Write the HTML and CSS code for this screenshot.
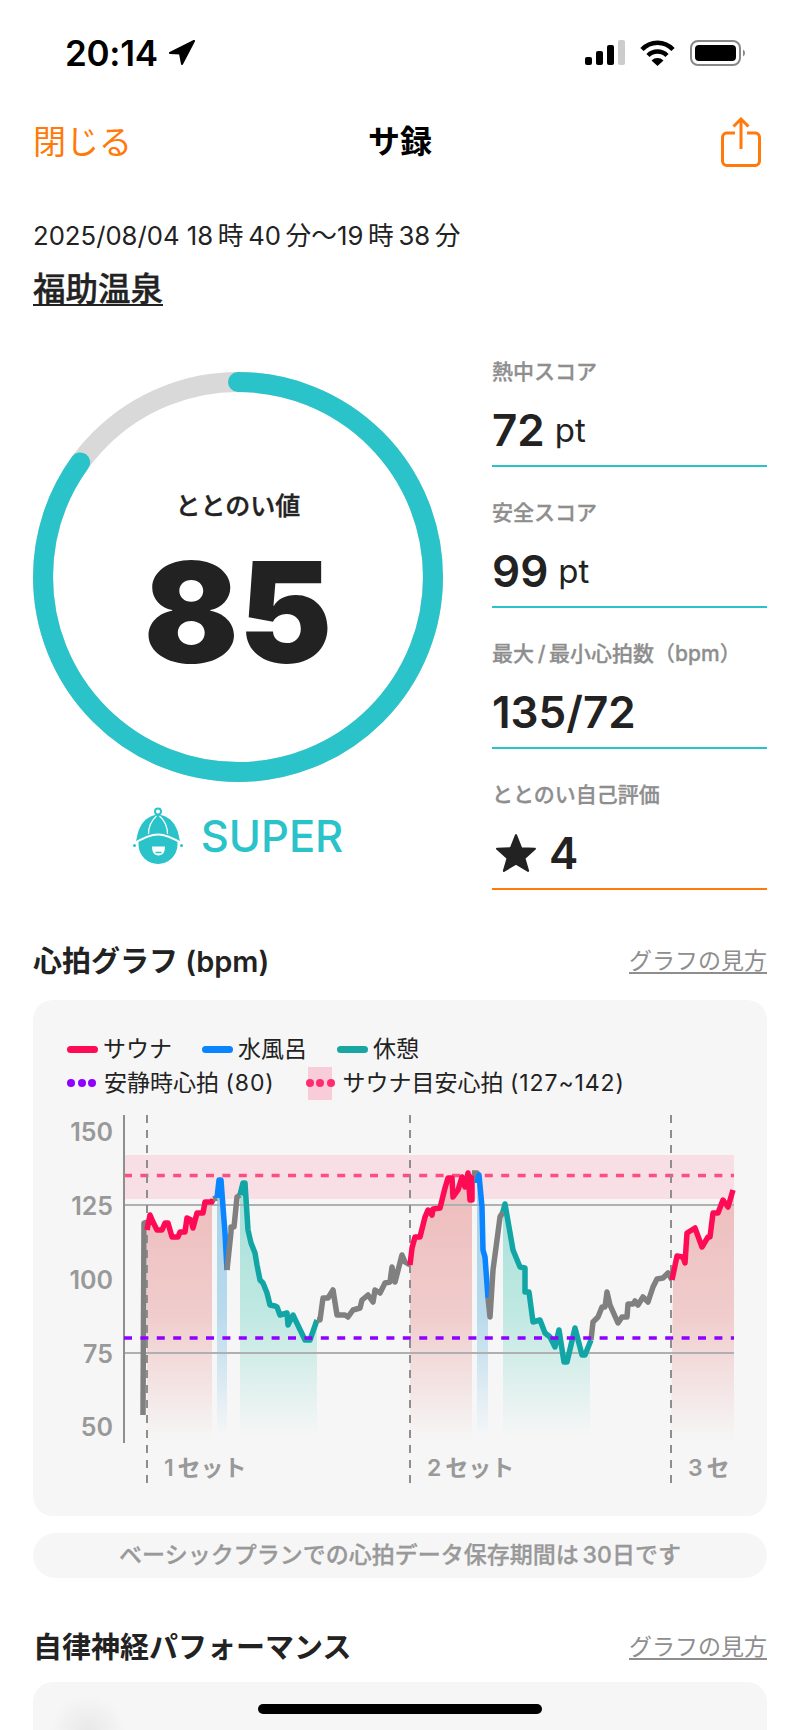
FILE: index.html
```html
<!DOCTYPE html>
<html>
<head>
	<title>サ録</title>
	<meta charset="utf-8">
	<meta name="viewport" content="width=device-width, initial-scale=1">
	<link rel="stylesheet" href="styles.css">
</head>
<body>
	<div id="screen">
		<div id="statusBar">
			<div id="statusLeft">
				<span id="clock">20:14</span>
				<svg class="locationIcon" viewBox="0 0 28 28" version="1.1" xmlns="http://www.w3.org/2000/svg">
					<polygon points="26,2 2,14 12,14.5 14,25" fill="#000" stroke="#000" stroke-width="2" stroke-linejoin="round"/>
				</svg>
			</div>
			<div id="statusRight">
				<svg class="signalIcon" viewBox="0 0 40 26" version="1.1" xmlns="http://www.w3.org/2000/svg">
					<rect x="0" y="17" width="7" height="8" rx="2" fill="#000"/>
					<rect x="11" y="11" width="7" height="14" rx="2" fill="#000"/>
					<rect x="22" y="5" width="7" height="20" rx="2" fill="#000"/>
					<rect x="33" y="0" width="7" height="25" rx="2" fill="#ccc"/>
				</svg>
				<svg class="wifiIcon" viewBox="0 0 35 26" version="1.1" xmlns="http://www.w3.org/2000/svg">
					<path d="M2 9.5A21 21 0 0 1 33 9.5" fill="none" stroke="#000" stroke-width="4.5"/>
					<path d="M8 15.5A13.5 13.5 0 0 1 27 15.5" fill="none" stroke="#000" stroke-width="4.5"/>
					<path d="M17.5 26L11.5 20.5A8.5 8.5 0 0 1 23.5 20.5Z" fill="#000"/>
				</svg>
				<svg class="batteryIcon" viewBox="0 0 56 26" version="1.1" xmlns="http://www.w3.org/2000/svg">
					<rect x="1" y="1" width="49" height="24" rx="7" fill="none" stroke="#888" stroke-width="2"/>
					<rect x="5" y="5" width="41" height="16" rx="4" fill="#000"/>
					<path d="M53 9.5A4 4 0 0 1 53 16.5Z" fill="#888"/>
				</svg>
			</div>
		</div>

		<div id="navBar">
			<span id="closeLink">閉じる</span>
			<span id="navTitle">サ録</span>
			<svg id="shareIcon" viewBox="0 0 40 50" version="1.1" xmlns="http://www.w3.org/2000/svg">
				<path d="M14 16H5.500A4.500 4.500 0 0 0 1.500 20.500V44A4.500 4.500 0 0 0 5.500 48.500H34.500A4.500 4.500 0 0 0 38.500 44V20.500A4.500 4.500 0 0 0 34.500 16H26" fill="none" stroke="#ff7a0a" stroke-width="3"/>
				<path d="M20 32V2M12.500 9.500L20 2L27.500 9.500" fill="none" stroke="#ff7a0a" stroke-width="3"/>
			</svg>
		</div>

		<div id="content">
			<div id="visitDate">2025/08/04 18&#8201;時&#8201;40&#8201;分〜19&#8201;時&#8201;38&#8201;分</div>
			<div id="facility">福助温泉</div>

			<div id="scoreSection">
				<div id="scoreLeft">
					<div id="ring">
						<svg id="ringSvg" viewBox="0 0 410 410" version="1.1" xmlns="http://www.w3.org/2000/svg">
							<circle cx="205" cy="205" r="195" fill="none" stroke="#d9d9d9" stroke-width="20"/>
							<circle cx="205" cy="205" r="195" fill="none" stroke="#29c3c9" stroke-width="20" stroke-linecap="round" pathLength="100" stroke-dasharray="85 100" transform="rotate(-90 205 205)"/>
						</svg>
						<div id="ringLabel">ととのい値</div>
						<div id="ringValue">85</div>
					</div>
					<div id="rank">
						<svg id="rankIcon" viewBox="0 0 50 58" version="1.1" xmlns="http://www.w3.org/2000/svg">
							<circle cx="25" cy="4.500" r="3" fill="none" stroke="#29c3c9" stroke-width="2"/>
							<circle cx="25" cy="37.500" r="19.500" fill="#29c3c9"/>
							<path d="M3 35C5 22 9 10 25 7.500C41 10 45 22 47 35L25 38Z" fill="#29c3c9"/>
							<path d="M15.500 27C15.500 20 19 13 23.500 9M34.500 27C34.500 20 31 13 26.500 9" fill="none" stroke="#fff" stroke-width="1.200"/>
							<path d="M0 37C10 31 18 27.500 25 27.500C32 27.500 40 31 50 37" fill="none" stroke="#fff" stroke-width="2"/>
							<circle cx="1.500" cy="38.500" r="1.500" fill="#29c3c9"/>
							<circle cx="48.500" cy="38.500" r="1.500" fill="#29c3c9"/>
							<path d="M19 39.500H32C32 45 30 48.500 25.500 48.500C21 48.500 19 45 19 39.500Z" fill="#fff"/>
							<path d="M22.500 45.500H28.500" stroke="#29c3c9" stroke-width="1.500"/>
						</svg>
						<span id="rankText">SUPER</span>
					</div>
				</div>

				<div id="scoreRight">
					<div class="statItem">
						<div class="statLabel">熱中スコア</div>
						<div class="statValue"><span>72</span><span class="statUnit">pt</span></div>
					</div>
					<div class="statItem">
						<div class="statLabel">安全スコア</div>
						<div class="statValue"><span>99</span><span class="statUnit">pt</span></div>
					</div>
					<div class="statItem">
						<div class="statLabel">最大&#8201;/&#8201;最小心拍数（bpm）</div>
						<div class="statValue">135/72</div>
					</div>
					<div class="statItem statItemOrange">
						<div class="statLabel">ととのい自己評価</div>
						<div class="statValue">
							<svg class="starIcon" viewBox="0 0 40 38" version="1.1" xmlns="http://www.w3.org/2000/svg">
								<polygon points="20,2 25,14.500 38,15 28,24 31.500,36 20,29 8.500,36 12,24 2,15 15,14.500" fill="#222" stroke="#222" stroke-width="2" stroke-linejoin="round"/>
							</svg>
							<span>4</span>
						</div>
					</div>
				</div>
			</div>

			<div class="sectionHead">
				<span class="sectionTitle">心拍グラフ (bpm)</span>
				<span class="graphHelp">グラフの見方</span>
			</div>

			<div id="heartCard">
				<div class="legendRow">
					<div class="legendItem"><span class="legendLine lineSauna"></span>サウナ</div>
					<div class="legendItem"><span class="legendLine lineWater"></span>水風呂</div>
					<div class="legendItem"><span class="legendLine lineRest"></span>休憩</div>
				</div>
				<div class="legendRow legendRowWide">
					<div class="legendItem"><span class="legendDots dotsPurple"><i></i><i></i><i></i></span><span>安静時心拍 <span class="legendNum">(80)</span></span></div>
					<div class="legendItem"><span class="legendDots dotsPink"><i></i><i></i><i></i></span><span>サウナ目安心拍 <span class="legendNum">(127~142)</span></span></div>
				</div>

				<svg id="heartChart" viewBox="33 1100 734 390" version="1.1" xmlns="http://www.w3.org/2000/svg">
					<defs>
						<linearGradient id="fadeSauna" gradientUnits="userSpaceOnUse" x1="0" y1="1190" x2="0" y2="1438">
							<stop offset="0" stop-color="#eebdbd"/>
							<stop offset="0.5" stop-color="#f0cccc"/>
							<stop offset="1" stop-color="#f6f5f5"/>
						</linearGradient>
						<linearGradient id="fadeWater" gradientUnits="userSpaceOnUse" x1="0" y1="1190" x2="0" y2="1435">
							<stop offset="0" stop-color="#a6d2ea"/>
							<stop offset="0.5" stop-color="#b8daec"/>
							<stop offset="1" stop-color="#f5f6f7"/>
						</linearGradient>
						<linearGradient id="fadeRest" gradientUnits="userSpaceOnUse" x1="0" y1="1190" x2="0" y2="1435">
							<stop offset="0" stop-color="#a4e0d8"/>
							<stop offset="0.5" stop-color="#c0e8e2"/>
							<stop offset="1" stop-color="#f5f6f6"/>
						</linearGradient>
					</defs>

					<rect x="124" y="1155" width="610" height="44" fill="#f8dfe6"/>

					<polygon fill="url(#fadeSauna)" points="147,1230 150,1215 157,1230 162,1230 165,1223 168,1223 172,1237 178,1237 180,1232 185,1232 187,1218 191,1220 193,1228 197,1213 203,1213 205,1202 212,1202 212,1440 147,1440"/>
					<polygon fill="url(#fadeWater)" points="217,1198 219,1180 221,1180 223,1207 225,1233 227,1270 227,1436 217,1436"/>
					<polygon fill="url(#fadeRest)" points="240,1190 243,1183 245,1193 248,1240 255,1253 260,1280 267,1293 270,1305 277,1307 280,1315 287,1313 288,1325 293,1315 305,1340 310,1340 317,1320 317,1436 240,1436"/>
					<polygon fill="url(#fadeSauna)" points="410,1265 411,1248 415,1237 420,1237 425,1217 428,1210 432,1215 433,1209 440,1208 445,1188 448,1178 452,1178 453,1197 458,1190 462,1177 465,1187 468,1173 472,1175 472,1440 410,1440"/>
					<polygon fill="url(#fadeWater)" points="477,1183 479,1175 482,1207 483,1250 485,1257 488,1298 488,1436 477,1436"/>
					<polygon fill="url(#fadeRest)" points="505,1204 513,1250 520,1267 525,1268 525,1292 529,1292 533,1322 540,1320 545,1333 550,1337 555,1347 559,1330 564,1362 567,1362 575,1328 582,1355 585,1355 590,1340 590,1436 503,1436 503,1212"/>
					<polygon fill="url(#fadeSauna)" points="673,1282 677,1256 683,1257 685,1263 687,1233 695,1228 702,1247 708,1237 710,1237 713,1213 718,1213 723,1200 728,1207 734,1190 734,1440 671,1440"/>

					<line class="gridLine" x1="124" y1="1205" x2="734" y2="1205"/>
					<line class="gridLine" x1="124" y1="1353" x2="734" y2="1353"/>
					<line class="pinkDash" x1="124" y1="1175.500" x2="734" y2="1175.500"/>

					<line class="axisLine" x1="124" y1="1115" x2="124" y2="1443"/>
					<line class="setLine" x1="147" y1="1115" x2="147" y2="1490"/>
					<line class="setLine" x1="410" y1="1115" x2="410" y2="1490"/>
					<line class="setLine" x1="671" y1="1115" x2="671" y2="1490"/>

					<polyline class="hr hrGray" points="143,1415 144,1223 147,1222"/>
					<polyline class="hr hrRed" points="147,1230 150,1215 153,1222 157,1230 162,1230 165,1223 168,1223 172,1237 178,1237 180,1232 185,1232 187,1218 191,1220 193,1228 197,1213 203,1213 205,1202 212,1202 213,1199"/>
					<polyline class="hr hrGray" points="213,1199 217,1198"/>
					<polyline class="hr hrBlue" points="217,1198 219,1180 221,1180 223,1207 225,1233 227,1270"/>
					<polyline class="hr hrGray" points="227,1270 231,1232 231,1227 234,1227 237,1197 240,1195"/>
					<polyline class="hr hrTeal" points="240,1195 243,1183 245,1183 248,1230 251,1243 255,1253 257,1265 260,1280 263,1283 267,1293 270,1305 275,1306 277,1307 280,1315 287,1313 288,1325 293,1315 305,1340 310,1340 317,1320"/>
					<polyline class="hr hrGray" points="317,1320 320,1320 323,1298 328,1298 333,1290 337,1315 345,1315 348,1317 353,1310 360,1308 362,1300 368,1295 373,1302 375,1290 380,1293 385,1283 390,1282 392,1267 395,1282 402,1255 405,1262 410,1265"/>
					<polyline class="hr hrRed" points="410,1265 412,1248 415,1237 420,1237 425,1217 428,1210 432,1215 433,1209 440,1208 445,1188 448,1178 452,1178 453,1197 458,1190 462,1177 465,1187 468,1173 470,1200 472,1200 472,1175"/>
					<polyline class="hr hrGray" points="472,1173 477,1173 477,1183"/>
					<polyline class="hr hrBlue" points="477,1183 479,1175 482,1207 483,1250 485,1257 488,1298"/>
					<polyline class="hr hrGray" points="488,1298 490,1317 493,1270 497,1240 500,1217 503,1212"/>
					<polyline class="hr hrTeal" points="503,1212 505,1204 513,1250 520,1267 525,1268 525,1292 529,1292 533,1322 540,1320 545,1333 550,1337 555,1347 559,1330 564,1362 567,1362 575,1328 582,1355 585,1355 591,1340"/>
					<polyline class="hr hrGray" points="591,1340 593,1322 598,1317 602,1307 605,1307 607,1292 610,1305 618,1323 622,1317 627,1317 628,1304 633,1304 635,1301 638,1305 643,1297 648,1302 653,1287 657,1279 663,1278 668,1273 672,1280"/>
					<polyline class="hr hrRed" points="672,1280 677,1256 683,1257 685,1263 687,1233 695,1228 702,1247 708,1237 710,1237 713,1213 718,1213 723,1200 728,1207 733,1190"/>

					<line class="purpleDash" x1="124" y1="1338" x2="734" y2="1338"/>

					<text class="axisText" x="113" y="1141">150</text>
					<text class="axisText" x="113" y="1215">125</text>
					<text class="axisText" x="113" y="1289">100</text>
					<text class="axisText" x="113" y="1363">75</text>
					<text class="axisText" x="113" y="1436">50</text>

					<text class="setText" x="164" y="1476">1&#8201;セット</text>
					<text class="setText" x="427" y="1476">2&#8201;セット</text>
					<text class="setText" x="688" y="1476">3&#8201;セ</text>
				</svg>
			</div>

			<div id="planNote">ベーシックプランでの心拍データ保存期間は&#8201;30日です</div>

			<div class="sectionHead sectionHeadNext">
				<span class="sectionTitle">自律神経パフォーマンス</span>
				<span class="graphHelp">グラフの見方</span>
			</div>

			<div id="nerveCard"></div>
		</div>

		<div id="homeIndicator"></div>
	</div>
</body>
</html>
```
FILE: styles.css
```css
html, body {
	padding: 0;
	margin: 0;
	border: 0;
	background: #fff;
}

body {
	font-family: "Inter", "Noto Sans CJK JP", sans-serif;
	color: #222;
}

svg {
	display: block;
}

#screen {
	position: relative;
	width: 800px;
	height: 1730px;
	overflow: hidden;
}

/* status bar */
#statusBar {
	display: flex;
	justify-content: space-between;
	align-items: center;
	height: 106px;
	padding: 0 54px 0 65px;
	box-sizing: border-box;
}

#statusLeft {
	display: flex;
	align-items: center;
	gap: 10px;
}

#clock {
	font-size: 35px;
	font-weight: 600;
	line-height: 40px;
	color: #000;
	letter-spacing: -0.3px;
}

.locationIcon {
	width: 28px;
	height: 28px;
}

#statusRight {
	display: flex;
	align-items: center;
	gap: 15px;
}

.signalIcon {
	width: 40px;
	height: 26px;
}

.wifiIcon {
	width: 35px;
	height: 26px;
}

.batteryIcon {
	width: 56px;
	height: 26px;
}

/* nav */
#navBar {
	display: grid;
	grid-template-columns: 1fr auto 1fr;
	align-items: center;
	height: 72px;
	padding: 0 33px;
}

#closeLink {
	font-size: 33px;
	color: #ff7a0a;
	line-height: 40px;
}

#navTitle {
	font-size: 32px;
	font-weight: 700;
	color: #000;
	line-height: 40px;
}

#shareIcon {
	justify-self: end;
	width: 40px;
	height: 50px;
	margin-right: 6px;
}

#content {
	padding: 0 33px;
}

#visitDate {
	margin-top: 43px;
	font-size: 25.7px;
	line-height: 30px;
}

#facility {
	margin-top: 19px;
	font-size: 32.5px;
	font-weight: 500;
	line-height: 40px;
	text-decoration: underline;
	text-decoration-thickness: 2px;
	text-underline-offset: 3px;
	-webkit-text-stroke: 0.4px #222;
}

/* score */
#scoreSection {
	display: flex;
	justify-content: space-between;
	margin-top: 16px;
}

#scoreLeft {
	width: 410px;
	padding-top: 46px;
}

#ring {
	position: relative;
	width: 410px;
	height: 410px;
	padding-top: 117px;
	box-sizing: border-box;
	text-align: center;
}

#ringSvg {
	position: absolute;
	left: 0;
	top: 0;
	width: 410px;
	height: 410px;
}

#ringLabel {
	font-size: 25px;
	font-weight: 500;
	line-height: 34px;
	-webkit-text-stroke: 0.4px #222;
}

#ringValue {
	margin-top: 29px;
	font-size: 140px;
	font-weight: 900;
	line-height: 120px;
}

#rank {
	display: flex;
	justify-content: center;
	align-items: center;
	gap: 18px;
	height: 58px;
	margin-top: 25px;
}

#rankIcon {
	width: 50px;
	height: 58px;
}

#rankText {
	font-size: 43.500px;
	font-weight: 500;
	color: #29c3c9;
}

#scoreRight {
	width: 275px;
}

.statItem {
	height: 141px;
	padding-top: 32px;
	box-sizing: border-box;
	border-bottom: 2px solid #29c3c9;
}

.statItemOrange {
	border-bottom-color: #ff7a0a;
}

.statLabel {
	font-size: 21px;
	font-weight: 500;
	line-height: 28px;
	color: #8e8e8e;
	-webkit-text-stroke: 0.3px #8e8e8e;
}

.statValue {
	display: flex;
	align-items: center;
	gap: 10px;
	margin-top: 19px;
	font-size: 44px;
	font-weight: 600;
	line-height: 50px;
}

.statUnit {
	font-size: 33px;
	font-weight: 400;
}

.starIcon {
	width: 42px;
	height: 40px;
	margin-left: 3px;
	margin-right: 2px;
}

/* heart rate */
.sectionHead {
	display: flex;
	justify-content: space-between;
	align-items: center;
	height: 40px;
	padding-bottom: 4px;
	box-sizing: border-box;
	margin-top: 51px;
}

.sectionHeadNext {
	margin-top: 49px;
}

.sectionTitle {
	font-size: 29px;
	font-weight: 600;
}

.graphHelp {
	font-size: 23px;
	color: #8e8e8e;
	text-decoration: underline;
	text-underline-offset: 3px;
}

#heartCard {
	margin-top: 19px;
	height: 516px;
	padding-top: 32px;
	box-sizing: border-box;
	border-radius: 20px;
	background: #f6f6f6;
}

.legendRow {
	display: flex;
	gap: 30px;
	height: 34px;
	padding-left: 34px;
}

.legendRowWide {
	gap: 31px;
}

.legendItem {
	display: flex;
	align-items: center;
	gap: 5px;
	font-size: 23px;
	line-height: 34px;
}

.legendNum {
	letter-spacing: 0.9px;
}

.legendLine {
	width: 31px;
	height: 7px;
	border-radius: 4px;
}

.lineSauna {
	background: #ff0a54;
}

.lineWater {
	background: #0a84ff;
}

.lineRest {
	background: #1aa6a0;
}

.legendDots {
	display: flex;
	align-items: center;
	gap: 2.5px;
	height: 33px;
	margin-right: 3px;
}

.legendDots i {
	width: 8px;
	height: 8px;
	border-radius: 50%;
}

.dotsPurple i {
	background: #8f00ff;
}

.dotsPink {
	background: linear-gradient(#f8ccd8, #f8ccd8) center / 24px 33px no-repeat;
}

.dotsPink i {
	background: #ff2d70;
}

#heartChart {
	width: 734px;
	height: 390px;
}

.gridLine {
	stroke: #b0b0b0;
	stroke-width: 2;
}

.axisLine {
	stroke: #8e8e8e;
	stroke-width: 2;
}

.setLine {
	stroke: #8e8e8e;
	stroke-width: 2;
	stroke-dasharray: 8 7;
}

.pinkDash {
	stroke: #ff4d80;
	stroke-width: 3.5;
	stroke-dasharray: 8 8.4;
}

.purpleDash {
	stroke: #8f00ff;
	stroke-width: 3.5;
	stroke-dasharray: 8 8.4;
}

.hr {
	fill: none;
	stroke-width: 5.5;
	stroke-linejoin: round;
}

.hrRed {
	stroke: #ff0a54;
}

.hrBlue {
	stroke: #0a84ff;
}

.hrTeal {
	stroke: #12a5a5;
}

.hrGray {
	stroke: #808080;
}

.axisText {
	font-size: 25px;
	font-weight: 600;
	fill: #999;
	text-anchor: end;
}

.setText {
	font-size: 23px;
	font-weight: 600;
	fill: #999;
}

#planNote {
	margin-top: 17px;
	height: 45px;
	border-radius: 23px;
	background: #f6f6f6;
	font-size: 23px;
	font-weight: 500;
	line-height: 45px;
	text-align: center;
	color: #999;
	-webkit-text-stroke: 0.3px #999;
}

#nerveCard {
	margin-top: 15px;
	height: 100px;
	border-radius: 20px;
	background: radial-gradient(circle at 55px 50px, #e8e8e8, #f6f6f6 38px);
}

#homeIndicator {
	position: absolute;
	left: 258px;
	top: 1704px;
	width: 284px;
	height: 10px;
	border-radius: 5px;
	background: #000;
}
```
